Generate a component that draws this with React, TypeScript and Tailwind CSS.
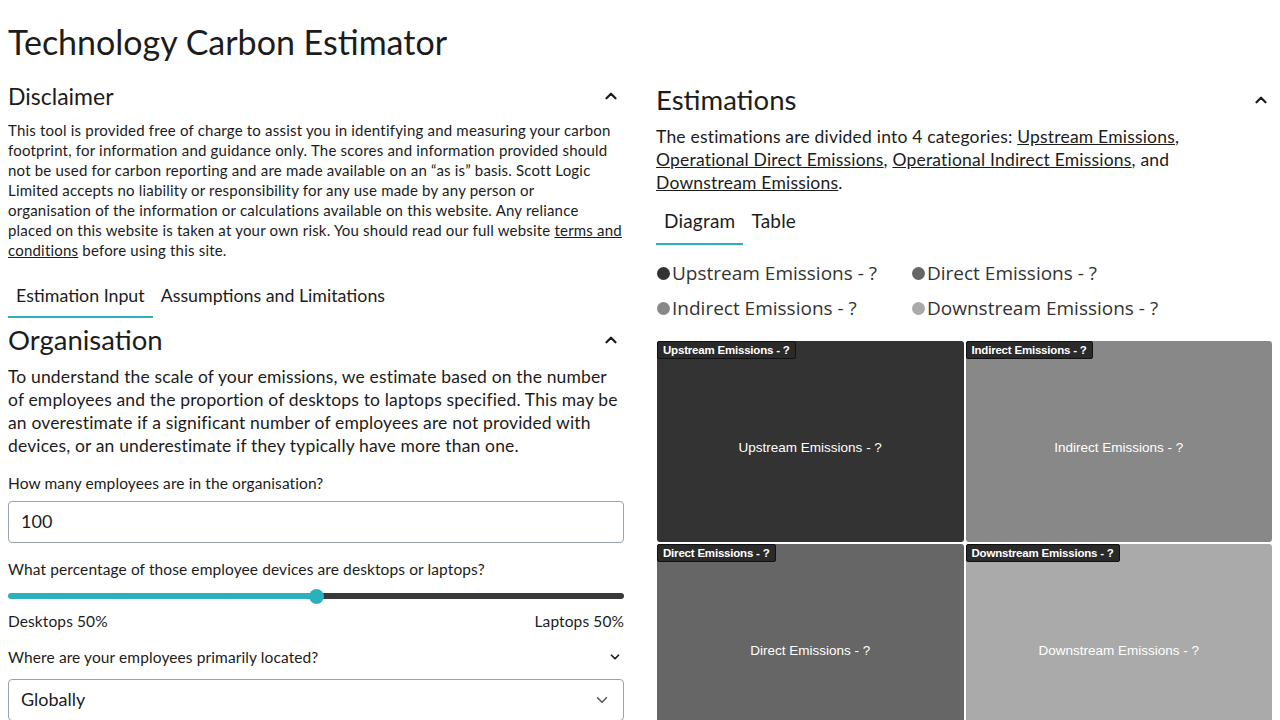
import { ChevronUp, ChevronDown } from "lucide-react";

const FONT = "font-['Lato','Noto_Sans',sans-serif]";
const LEGEND = [
  { label: "Upstream Emissions - ?", color: "bg-[#333333]" },
  { label: "Direct Emissions - ?", color: "bg-[#666666]" },
  { label: "Indirect Emissions - ?", color: "bg-[#888888]" },
  { label: "Downstream Emissions - ?", color: "bg-[#aaaaaa]" },
];

const CELLS = [
  { label: "Upstream Emissions - ?", bg: "bg-[#333333]" },
  { label: "Indirect Emissions - ?", bg: "bg-[#888888]" },
  { label: "Direct Emissions - ?", bg: "bg-[#666666]" },
  { label: "Downstream Emissions - ?", bg: "bg-[#aaaaaa]" },
];

function Tabs({ items, size }: { items: string[]; size: string }) {
  return (
    <div className={`flex text-[#1c1c1c] ${size}`}>
      {items.map((t, i) => (
        <div
          key={t}
          className={
            i === 0
              ? "border-b-2 border-[#2bb0bd] px-[8px] pb-[7px] pt-[4px]"
              : "px-[8px] pb-[7px] pt-[4px]"
          }
        >
          {t}
        </div>
      ))}
    </div>
  );
}

function Disclaimer() {
  return (
    <section>
      <div className="flex items-center justify-between pt-[2px]">
        <h2 className="text-[23px] leading-[32px]">Disclaimer</h2>
        <ChevronUp size={18} strokeWidth={3} className="mr-[4px]" />
      </div>
      <p className="mt-[8px] whitespace-nowrap text-[15px] leading-[20px] tracking-[0.2px] text-[#1c1c1c]">
        This tool is provided free of charge to assist you in identifying and measuring your carbon
        <br />
        footprint, for information and guidance only. The scores and information provided should
        <br />
        not be used for carbon reporting and are made available on an “as is” basis. Scott Logic
        <br />
        Limited accepts no liability or responsibility for any use made by any person or
        <br />
        organisation of the information or calculations available on this website. Any reliance
        <br />
        placed on this website is taken at your own risk. You should read our full website{" "}
        <span className="underline">terms and</span>
        <br />
        <span className="underline">conditions</span> before using this site.
      </p>
    </section>
  );
}

function Organisation() {
  return (
    <section className="mt-[2px]">
      <div className="flex items-center justify-between">
        <h2 className="text-[27.5px] leading-[40px]">Organisation</h2>
        <ChevronUp size={18} strokeWidth={3} className="mr-[4px]" />
      </div>
      <p className="mt-[5px] whitespace-nowrap text-[17.5px] leading-[23px] tracking-[0.15px] text-[#1c1c1c]">
        To understand the scale of your emissions, we estimate based on the number
        <br />
        of employees and the proportion of desktops to laptops specified. This may be
        <br />
        an overestimate if a significant number of employees are not provided with
        <br />
        devices, or an underestimate if they typically have more than one.
      </p>

      <label className="mt-[15px] block text-[15.5px] leading-[22px] tracking-[0.1px]">
        How many employees are in the organisation?
      </label>
      <div className="mt-[7px] flex h-[42px] items-center rounded-[4px] border border-[#9aa3b3] px-[12px] text-[18px]">
        100
      </div>

      <label className="mt-[15px] block text-[15.5px] leading-[22px] tracking-[0.1px]">
        What percentage of those employee devices are desktops or laptops?
      </label>
      <div className="relative mt-[9px] h-[14px]">
        <div className="absolute left-0 right-0 top-[4px] flex h-[6px] overflow-hidden rounded-full">
          <div className="w-1/2 bg-[#2bb0bd]" />
          <div className="w-1/2 bg-[#3a3a3a]" />
        </div>
        <div className="absolute left-[calc(50%-7px)] top-0 h-[15px] w-[15px] rounded-full bg-[#2bb0bd]" />
      </div>
      <div className="mt-[7px] flex justify-between text-[15.5px] leading-[22px] tracking-[0.1px]">
        <span>Desktops 50%</span>
        <span>Laptops 50%</span>
      </div>

      <div className="mt-[14px] flex items-center justify-between text-[15.5px] leading-[22px] tracking-[0.1px]">
        <span>Where are your employees primarily located?</span>
        <ChevronDown size={14} strokeWidth={3} className="mr-[2px]" />
      </div>
      <div className="mt-[11px] flex h-[42px] items-center justify-between rounded-[4px] border border-[#9aa3b3] pl-[12px] pr-[12px] text-[18px]">
        <span>Globally</span>
        <ChevronDown size={18} strokeWidth={2} className="text-[#555]" />
      </div>
    </section>
  );
}

function Estimations() {
  return (
    <section>
      <div className="flex items-center justify-between pt-[2px]">
        <h2 className="text-[27.5px] leading-[40px]">Estimations</h2>
        <ChevronUp size={18} strokeWidth={3} className="mr-[2px]" />
      </div>
      <p className="mt-[5px] whitespace-nowrap text-[17.5px] leading-[23px] tracking-[0.2px] text-[#1c1c1c]">
        The estimations are divided into 4 categories:{" "}
        <span className="underline">Upstream Emissions</span>,
        <br />
        <span className="underline">Operational Direct Emissions</span>,{" "}
        <span className="underline">Operational Indirect Emissions</span>, and
        <br />
        <span className="underline">Downstream Emissions</span>.
      </p>
      <div className="mt-[9px]">
        <Tabs items={["Diagram", "Table"]} size="text-[19px] tracking-[0.2px]" />
      </div>

      <div className="mt-[17px] grid grid-cols-[255px_1fr] gap-y-[12px] font-['Open_Sans',sans-serif] text-[19px] leading-[23px] text-[#333]">
        {LEGEND.map((l) => (
          <div key={l.label} className="flex items-center gap-[2px] pl-[1px]">
            <span className={`h-[13px] w-[13px] rounded-full ${l.color}`} />
            <span>{l.label}</span>
          </div>
        ))}
      </div>

      <div className="mt-[21px] grid grid-cols-2 grid-rows-[201px_201px] gap-[2px] pl-[1px] font-['Liberation_Sans_Narrow','Liberation_Sans',sans-serif]">
        {CELLS.map((c) => (
          <div key={c.label} className={`relative flex items-center justify-center rounded-[3px] pt-[14px] ${c.bg}`}>
            <span className="absolute left-0 top-0 rounded-[2px] border border-[#111] bg-[#2a2a2a] px-[5px] text-[11.5px] font-bold leading-[16px] tracking-[-0.2px] text-white">
              {c.label}
            </span>
            <span className="text-[13.5px] text-white">{c.label}</span>
          </div>
        ))}
      </div>
    </section>
  );
}

export default function App() {
  return (
    <div className={`${FONT} min-h-screen bg-white px-[8px] text-[#1c1c1c]`}>
      <h1 className="pb-[14px] pt-[20px] text-[34px] leading-[44px]">Technology Carbon Estimator</h1>
      <div className="grid grid-cols-[616px_616px] gap-[32px]">
        <div>
          <Disclaimer />
          <div className="mt-[18px]">
            <Tabs items={["Estimation Input", "Assumptions and Limitations"]} size="text-[17.8px]" />
          </div>
          <Organisation />
        </div>
        <Estimations />
      </div>
    </div>
  );
}
